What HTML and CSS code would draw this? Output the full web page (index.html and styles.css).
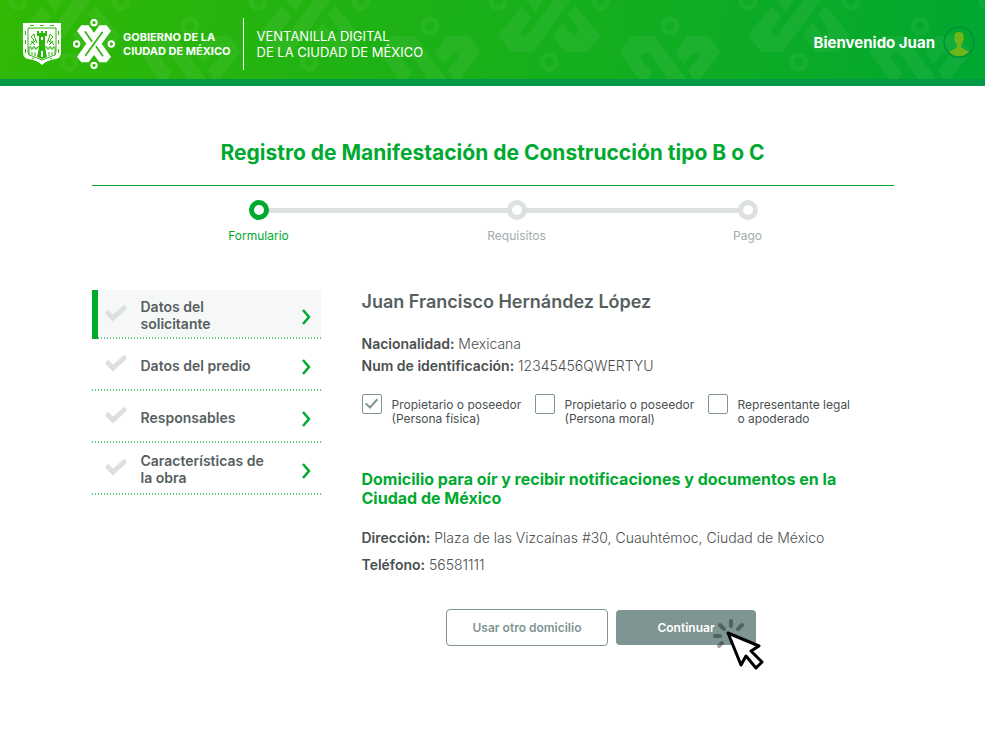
FILE: index.html
```html
<!DOCTYPE html>
<html lang="es">
<head>
<meta charset="utf-8">
<meta name="viewport" content="width=device-width, initial-scale=1">
<title>Ventanilla Digital de la Ciudad de México</title>
<link rel="stylesheet" href="styles.css">
</head>
<body>
<header class="site-header">
  <svg class="header-pattern" width="1225" height="79" viewBox="0 0 1225 79" aria-hidden="true">
    <defs>
      <g id="motif">
        <path d="M18 35 42 6 51 17 41 31Q40 35 44 36 48 36 51 31L73 0H91L53 52H31Z"/>
        <path d="M46 0H64L55 12Z"/>
        <path d="M73 35 83 23 91 34Q94 37 97 34 99 31 97 27L88 14 96 6 120 36 108 52H85Z"/>
        <path d="M139 52 152 36H175L206 79H188L170 54Q166 51 162 54 160 57 162 60L172 73 168 79H159Z"/>
        <path d="M195 53 207 36H229L241 52 220 79H213L208 70 218 58Q219 54 216 53 213 52 210 56L204 64Z"/>
        <g fill="none" stroke="#fff" stroke-width="5">
          <circle cx="18" cy="1" r="7"/><circle cx="121" cy="1" r="7"/>
          <circle cx="69" cy="62" r="7"/><circle cx="190" cy="26" r="7"/>
        </g>
      </g>
    </defs>
    <g fill="#fff">
      <use href="#motif"/>
      <use href="#motif" x="240"/>
      <use href="#motif" x="480"/>
      <use href="#motif" x="730"/>
      <use href="#motif" x="970"/>
    </g>
  </svg>
  <div class="brand">
    <svg class="shield" width="38" height="42" viewBox="0 0 38 42" aria-hidden="true">
      <path fill="#fff" d="M0 0H38V29Q38 35 33 36 24 37 19 42 14 37 5 36 0 35 0 29Z"/>
      <path fill="none" stroke="#2bb60b" stroke-width="1" d="M5 5H33V29Q33 33 29 33L19 37 9 33Q5 33 5 29Z"/>
      <g fill="none" stroke="#2bb60b" stroke-width="1">
        <path d="M7 22 11 17 8 14 11 11 12 15 14 20M31 22 27 17 30 14 27 11 26 15 24 20M8 18 12 22M30 18 26 22M10 20 13 17M28 20 25 17"/>
        <path d="M7 2.500H11M17 2.500H21M27 2.500H31M2.500 8V12M2.500 17V21M2.500 26V30M35.500 8V12M35.500 17V21M35.500 26V30M9 35 11 36M29 35 27 36"/>
        <path d="M6 32V24H8V26H10V24H12V26H14V24H16M22 24H24V26H26V24H28V26H30V24H32V32M9 32V29M12 33V29M26 33V29M29 32V29"/>
      </g>
      <path fill="#2bb60b" d="M14 8H16V10H18V8H20V10H22V8H24V13H22V24L24 34 19 36 14 34 16 24V13H14Z"/>
      <path fill="#fff" d="M18 14H20V17H18ZM18 28H20V34H18Z"/>
    </svg>
    <svg class="emblem" width="42" height="50" viewBox="0 0 126 150" aria-hidden="true">
      <g fill="none" stroke="#fff" stroke-width="6">
        <circle cx="63" cy="11" r="8"/><circle cx="63" cy="139" r="8"/>
        <circle cx="11" cy="75" r="8"/><circle cx="115" cy="75" r="8"/>
      </g>
      <g transform="translate(12 19)">
        <path fill="#fff" d="M0 17 13 0H35L51 22 67 0H89L102 17 74 55 102 94 89 111H67L51 89 35 111H13L0 94 28 55Z"/>
        <path fill="none" stroke="#2bb60b" stroke-width="5" stroke-linecap="round" d="M25 20 44 47M77 91 58 64M76 21 37 75M26 90 65 36"/>
      </g>
    </svg>
    <p class="brand-name">GOBIERNO DE LA<br>CIUDAD DE MÉXICO</p>
    <p class="portal-name">VENTANILLA DIGITAL<br>DE LA CIUDAD DE MÉXICO</p>
  </div>
  <div class="user">
    <span>Bienvenido Juan</span>
    <svg width="32" height="32" viewBox="0 0 32 32" aria-hidden="true">
      <path fill="#6db51b" d="M16 6C11 6 11 9 11.500 12 11 13 11 15 12.500 16 13 18 14 19 14 20 14 23 7 24 5 27Q10 31 16 31T27 27C25 24 18 23 18 20 18 19 19 18 19.500 16 21 15 21 13 20.500 12 21 9 21 6 16 6Z"/>
      <circle cx="16" cy="16" r="15" fill="none" stroke="#008f3c" stroke-width="1.500"/>
    </svg>
  </div>
</header>

<main class="page">
  <h1>Registro de Manifestación de Construcción tipo B o C</h1>

  <ol class="steps">
    <li class="step step-first current" aria-current="step"><span>Formulario</span></li>
    <li class="step step-second"><span>Requisitos</span></li>
    <li class="step step-last"><span>Pago</span></li>
  </ol>

  <div class="columns">
    <nav class="sections" aria-label="Secciones">
      <svg class="symbols" width="0" height="0" aria-hidden="true">
        <symbol id="tick" viewBox="0 0 22 18"><path d="M3 9 8 14 19 4" fill="none" stroke="#dce0e0" stroke-width="5" stroke-linecap="round"/></symbol>
        <symbol id="chevron" viewBox="0 0 9 16"><path d="M1 1 7 8 1 15" fill="none" stroke="#00aa2f" stroke-width="2.500"/></symbol>
      </svg>
      <a href="#" class="section active"><svg class="tick"><use href="#tick"/></svg><span>Datos del<br>solicitante</span><svg class="chevron"><use href="#chevron"/></svg></a>
      <a href="#" class="section"><svg class="tick"><use href="#tick"/></svg><span>Datos del predio</span><svg class="chevron"><use href="#chevron"/></svg></a>
      <a href="#" class="section"><svg class="tick"><use href="#tick"/></svg><span>Responsables</span><svg class="chevron"><use href="#chevron"/></svg></a>
      <a href="#" class="section"><svg class="tick"><use href="#tick"/></svg><span>Características de<br>la obra</span><svg class="chevron"><use href="#chevron"/></svg></a>
    </nav>

    <form class="details">
      <h2>Juan Francisco Hernández López</h2>
      <p class="fact"><b>Nacionalidad:</b> Mexicana</p>
      <p class="fact"><b>Num de identificación:</b> 12345456QWERTYU</p>

      <div class="roles">
        <div class="role"><input type="checkbox" id="fisica" checked><label for="fisica">Propietario o poseedor<br>(Persona física)</label></div>
        <div class="role"><input type="checkbox" id="moral"><label for="moral">Propietario o poseedor<br>(Persona moral)</label></div>
        <div class="role"><input type="checkbox" id="legal"><label for="legal">Representante legal<br>o apoderado</label></div>
      </div>

      <h3>Domicilio para oír y recibir notificaciones y documentos en la Ciudad de México</h3>
      <div class="address">
        <p><b>Dirección:</b> Plaza de las Vizcaínas #30, Cuauhtémoc, Ciudad de México</p>
        <p><b>Teléfono:</b> 56581111</p>
      </div>

      <div class="actions">
        <button type="button" class="button outline">Usar otro domicilio</button>
        <div class="pointed">
          <button type="button" class="button solid">Continuar</button>
          <svg class="pointer" width="52" height="52" viewBox="0 0 52 52" aria-hidden="true">
            <path d="M19 3V8M8 7 12 11M30 7 26 11M3 18H8M7 28 10 25" fill="none" stroke="#000" stroke-opacity=".35" stroke-width="4" stroke-linecap="round"/>
            <path d="M16 15 47 28 39 33 50 44 44 50 34 38 29 47Z" fill="#fff" stroke="#000" stroke-width="3" stroke-linejoin="round"/>
          </svg>
        </div>
      </div>
    </form>
  </div>
</main>
</body>
</html>
```
FILE: styles.css
```css
*,
*::before,
*::after {
  box-sizing: border-box;
}

body {
  margin: 0;
  background: #fff;
  color: #4a4f4f;
  font-family: Inter, "Liberation Sans", sans-serif;
  font-size: 14px;
}

h1, h2, h3, p, ol {
  margin: 0;
}

.site-header {
  position: relative;
  display: flex;
  align-items: center;
  justify-content: space-between;
  min-height: 86px;
  padding: 0 10px 0 23px;
  overflow: hidden;
  border-bottom: 7px solid #009a46;
  background: linear-gradient(100deg, #30b904, #12ad20 65%, #00a830);
  color: #fff;
}

.header-pattern {
  position: absolute;
  top: 0;
  left: 0;
  opacity: 0.05;
}

.brand {
  position: relative;
  display: flex;
  align-items: center;
  padding-top: 8px;
}

.emblem {
  margin: 0 8px 0 12px;
}

.brand-name {
  font-size: 11px;
  font-weight: 700;
  line-height: 14px;
}

.portal-name {
  margin-left: 12px;
  padding: 10px 0 10px 13px;
  border-left: 1px solid #fff;
  font-size: 13px;
  line-height: 16px;
}

.user {
  position: relative;
  display: flex;
  align-items: center;
  gap: 8px;
  padding-top: 5px;
  font-size: 15px;
  font-weight: 700;
}

.page {
  max-width: 802px;
  margin: 0 auto;
  padding: 52px 0 78px;
}

h1 {
  padding-bottom: 17px;
  border-bottom: 1px solid #00aa2f;
  color: #00aa2f;
  font-size: 21px;
  line-height: 30px;
  text-align: center;
}

.steps {
  display: flex;
  margin: 14px 136px 0 157px;
  padding: 0;
  list-style: none;
}

.step {
  position: relative;
  display: flex;
  flex-direction: column;
  color: #a3adad;
  font-size: 12px;
  line-height: 16px;
}

.step-first {
  flex: 258 0 0;
}

.step-second {
  flex: 231 0 0;
}

.step-last {
  flex: none;
}

.step::before {
  z-index: 1;
  width: 20px;
  height: 20px;
  border: 5px solid #dce0e0;
  border-radius: 50%;
  background: #fff;
  content: "";
}

.step:not(.step-last)::after {
  position: absolute;
  top: 8px;
  left: 10px;
  width: 100%;
  height: 5px;
  background: #dce0e0;
  content: "";
}

.step span {
  display: flex;
  justify-content: center;
  width: 20px;
  margin-top: 8px;
}

.current {
  color: #00aa2f;
}

.step.current::before {
  border-color: #00aa2f;
}

.columns {
  display: grid;
  grid-template-columns: 229px minmax(0, 1fr);
  gap: 41px;
  margin-top: 46px;
}

.symbols {
  position: absolute;
}

.section {
  display: flex;
  align-items: center;
  height: 52px;
  padding: 0 10px 0 13px;
  background: repeating-linear-gradient(90deg, #5cc97b 0 1px, #fff 1px 3px) bottom / 100% 2px no-repeat;
  color: #566060;
  font-weight: 600;
  line-height: 17px;
  text-decoration: none;
}

.active {
  height: 49px;
  padding-left: 7px;
  border-left: 6px solid #00aa2f;
  background-color: #f6f8f7;
}

.section span {
  flex: 1;
  margin-left: 14px;
}

.tick {
  width: 22px;
  height: 18px;
  margin-bottom: 4px;
}

.chevron {
  width: 9px;
  height: 16px;
  margin-top: 4px;
}

.details {
  padding-top: 1px;
}

h2 {
  margin-bottom: 20px;
  color: #566060;
  font-size: 18px;
  font-weight: 600;
  line-height: 22px;
}

.details p {
  font-weight: 300;
}

.details b {
  font-weight: 600;
}

.fact {
  line-height: 22px;
}

.roles {
  display: grid;
  grid-template-columns: 173px 173px 1fr;
  margin-top: 17px;
  font-size: 12px;
  line-height: 14px;
}

.role {
  display: flex;
  gap: 10px;
}

.role label {
  padding-top: 4px;
}

.role input {
  display: flex;
  flex: none;
  justify-content: center;
  width: 20px;
  height: 20px;
  margin: 0;
  border: 1px solid #7f9593;
  border-radius: 2px;
  appearance: none;
}

.role input:checked::after {
  width: 7px;
  height: 12px;
  margin-top: 1px;
  border: solid #7f9593;
  border-width: 0 2px 2px 0;
  rotate: 42deg;
  content: "";
}

h3 {
  margin-top: 44px;
  padding-right: 40px;
  color: #00aa2f;
  font-size: 16px;
  font-weight: 700;
  line-height: 19px;
}

.address {
  margin-top: 16px;
  line-height: 27px;
}

.actions {
  display: flex;
  align-items: center;
  gap: 8px;
  margin: 31px 0 0 84px;
}

.button {
  border-radius: 4px;
  font: 600 12px/15px Inter, "Liberation Sans", sans-serif;
}

.outline {
  padding: 10px 26px;
  border: 1px solid #7f9593;
  background: #fff;
  color: #7f9593;
}

.solid {
  padding: 10px 41px;
  border: 0;
  background: #7f9593;
  color: #fff;
}

.pointed {
  position: relative;
}

.pointer {
  position: absolute;
  top: 8px;
  left: 96px;
}
```
